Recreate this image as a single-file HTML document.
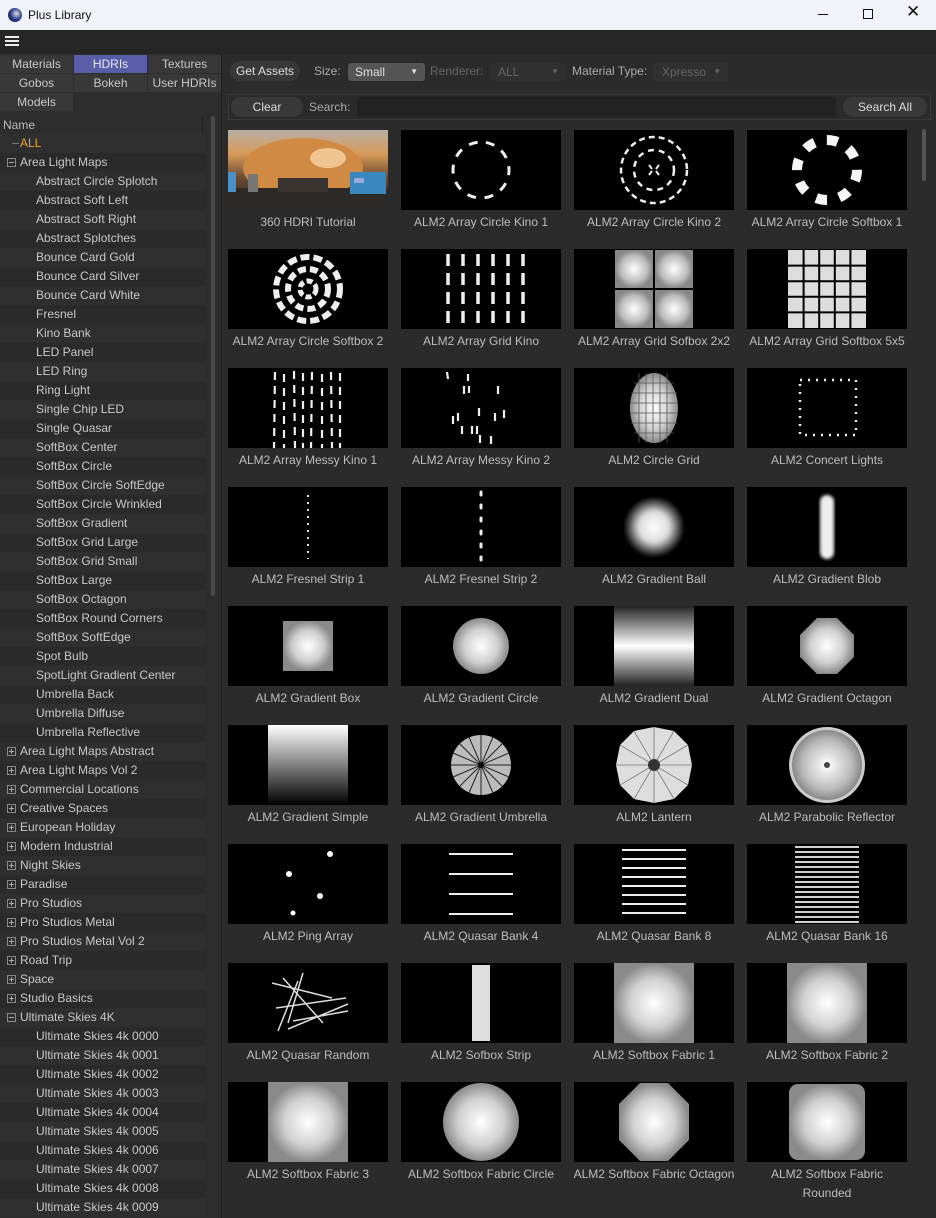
<!DOCTYPE html>
<html><head><meta charset="utf-8"><style>
*{margin:0;padding:0;box-sizing:border-box}
body{width:936px;height:1218px;overflow:hidden;background:#2b2b2b;font-family:"Liberation Sans",sans-serif;font-size:12px;color:#c8c8c8;position:relative}
.abs{position:absolute}
#title{left:0;top:0;width:936px;height:30px;background:#f0f3f9;color:#111;font-size:12px}
#menu{left:0;top:30px;width:936px;height:24px;background:#262626}
#left{left:0;top:54px;width:222px;height:1164px;background:#2d2d2d;border-right:1px solid #1e1e1e}
.tab{position:absolute;height:18px;background:#383838;color:#c8c8c8;text-align:center;line-height:18px;font-size:12px}
.row{position:absolute;left:0;width:206px;height:19px;line-height:19px;white-space:nowrap}
.row.o{background:#2f2f2f}
.row.e{background:#2a2a2a}
.box{position:absolute;left:7px;top:5px;width:9px;height:9px;border:1px solid #8a8a8a}
.box:before{content:"";position:absolute;left:1px;top:3px;width:5px;height:1px;background:#aaa}
.box.p:after{content:"";position:absolute;left:3px;top:1px;width:1px;height:5px;background:#aaa}
.vl{position:absolute;left:27px;width:1px;background:#6a6a6a}
#right{left:223px;top:54px;width:713px;height:1164px;background:#2b2b2b}
.btn{position:absolute;height:20px;border-radius:10px;background:#393939;color:#ddd;text-align:center;line-height:20px;font-size:12px}
.cell{position:absolute;width:160px}
.cell svg{display:block;width:160px;height:80px;background:#000}
.cell div{text-align:center;margin-top:3px;line-height:19px;color:#bdbdbd;font-size:12px;width:180px;margin-left:-10px}
</style></head><body>
<svg width="0" height="0" style="position:absolute"><defs>
<radialGradient id="g"><stop offset="0" stop-color="#fff"/><stop offset="0.7" stop-color="#bbb"/><stop offset="1" stop-color="#888"/></radialGradient>
<radialGradient id="s"><stop offset="0" stop-color="#fff"/><stop offset="0.5" stop-color="#ddd"/><stop offset="1" stop-color="#000"/></radialGradient>
<radialGradient id="c"><stop offset="0" stop-color="#fff"/><stop offset="0.6" stop-color="#d0d0d0"/><stop offset="1" stop-color="#8a8a8a"/></radialGradient>
<linearGradient id="v" x1="0" y1="0" x2="0" y2="1"><stop offset="0" stop-color="#fff"/><stop offset="1" stop-color="#000"/></linearGradient>
<linearGradient id="d" x1="0" y1="0" x2="0" y2="1"><stop offset="0" stop-color="#222"/><stop offset="0.5" stop-color="#fff"/><stop offset="1" stop-color="#222"/></linearGradient>
<linearGradient id="ph" x1="0" y1="0" x2="0" y2="1"><stop offset="0" stop-color="#b8aea4"/><stop offset="0.3" stop-color="#d89a58"/><stop offset="0.6" stop-color="#6a4a30"/><stop offset="1" stop-color="#2a2624"/></linearGradient>
<filter id="b"><feGaussianBlur stdDeviation="1.5"/></filter>
</defs></svg>

<div id="title" class="abs">
 <div class="abs" style="left:8px;top:8px;width:14px;height:14px;border-radius:50%;background:radial-gradient(circle at 60% 40%,#ddd,#2a3c8c 50%,#111)"></div>
 <div class="abs" style="left:28px;top:8px">Plus Library</div>
 <div class="abs" style="left:818px;top:14px;width:10px;height:1px;background:#111"></div>
 <div class="abs" style="left:863px;top:9px;width:10px;height:10px;border:1px solid #111"></div>
 <div class="abs" style="left:906px;top:2px;font-size:17px">✕</div>
</div>
<div id="menu" class="abs">
 <div class="abs" style="left:5px;top:6px;width:14px;height:2px;background:#eee;box-shadow:0 4px 0 #eee,0 8px 0 #eee"></div>
</div>
<div id="left" class="abs">
 <div class="tab" style="left:0;top:1px;width:73px">Materials</div>
 <div class="tab" style="left:74px;top:1px;width:73px;background:#5a5ea8;color:#e8e8f8">HDRIs</div>
 <div class="tab" style="left:148px;top:1px;width:73px">Textures</div>
 <div class="tab" style="left:0;top:20px;width:73px">Gobos</div>
 <div class="tab" style="left:74px;top:20px;width:73px">Bokeh</div>
 <div class="tab" style="left:148px;top:20px;width:73px">User HDRIs</div>
 <div class="tab" style="left:0;top:39px;width:73px">Models</div>
 <div class="abs" style="left:0;top:62px;width:206px;height:19px;line-height:19px;padding-left:3px;border-bottom:1px solid #222;color:#bbb">Name</div>
 <div class="abs" style="left:202px;top:62px;width:1px;height:19px;background:#222"></div>
 <div class="abs" style="left:211px;top:62px;width:4px;height:480px;background:#4a4a4a;border-radius:2px"></div>
</div>
<div class="abs" style="left:0;top:134px;width:222px;height:1084px">
<div class="row o" style="top:0"><span style="position:absolute;left:12px;top:9px;width:7px;height:1px;background:#777"></span><span style="position:absolute;left:20px;color:#f0a030">ALL</span></div>
<div class="row e" style="top:19px"><span class="box"></span><span style="position:absolute;left:20px">Area Light Maps</span></div>
<div class="vl" style="top:38px;height:580px"></div>
</div>
<div class="abs" style="left:0;top:172px;width:222px">
<div class="row o" style="top:0px;padding-left:36px">Abstract Circle Splotch</div>
<div class="row e" style="top:19px;padding-left:36px">Abstract Soft Left</div>
<div class="row o" style="top:38px;padding-left:36px">Abstract Soft Right</div>
<div class="row e" style="top:57px;padding-left:36px">Abstract Splotches</div>
<div class="row o" style="top:76px;padding-left:36px">Bounce Card Gold</div>
<div class="row e" style="top:95px;padding-left:36px">Bounce Card Silver</div>
<div class="row o" style="top:114px;padding-left:36px">Bounce Card White</div>
<div class="row e" style="top:133px;padding-left:36px">Fresnel</div>
<div class="row o" style="top:152px;padding-left:36px">Kino Bank</div>
<div class="row e" style="top:171px;padding-left:36px">LED Panel</div>
<div class="row o" style="top:190px;padding-left:36px">LED Ring</div>
<div class="row e" style="top:209px;padding-left:36px">Ring Light</div>
<div class="row o" style="top:228px;padding-left:36px">Single Chip LED</div>
<div class="row e" style="top:247px;padding-left:36px">Single Quasar</div>
<div class="row o" style="top:266px;padding-left:36px">SoftBox Center</div>
<div class="row e" style="top:285px;padding-left:36px">SoftBox Circle</div>
<div class="row o" style="top:304px;padding-left:36px">SoftBox Circle SoftEdge</div>
<div class="row e" style="top:323px;padding-left:36px">SoftBox Circle Wrinkled</div>
<div class="row o" style="top:342px;padding-left:36px">SoftBox Gradient</div>
<div class="row e" style="top:361px;padding-left:36px">SoftBox Grid Large</div>
<div class="row o" style="top:380px;padding-left:36px">SoftBox Grid Small</div>
<div class="row e" style="top:399px;padding-left:36px">SoftBox Large</div>
<div class="row o" style="top:418px;padding-left:36px">SoftBox Octagon</div>
<div class="row e" style="top:437px;padding-left:36px">SoftBox Round Corners</div>
<div class="row o" style="top:456px;padding-left:36px">SoftBox SoftEdge</div>
<div class="row e" style="top:475px;padding-left:36px">Spot Bulb</div>
<div class="row o" style="top:494px;padding-left:36px">SpotLight Gradient Center</div>
<div class="row e" style="top:513px;padding-left:36px">Umbrella Back</div>
<div class="row o" style="top:532px;padding-left:36px">Umbrella Diffuse</div>
<div class="row e" style="top:551px;padding-left:36px">Umbrella Reflective</div>
<div class="row o" style="top:570px;padding-left:20px"><span class="box p"></span>Area Light Maps Abstract</div>
<div class="row e" style="top:589px;padding-left:20px"><span class="box p"></span>Area Light Maps Vol 2</div>
<div class="row o" style="top:608px;padding-left:20px"><span class="box p"></span>Commercial Locations</div>
<div class="row e" style="top:627px;padding-left:20px"><span class="box p"></span>Creative Spaces</div>
<div class="row o" style="top:646px;padding-left:20px"><span class="box p"></span>European Holiday</div>
<div class="row e" style="top:665px;padding-left:20px"><span class="box p"></span>Modern Industrial</div>
<div class="row o" style="top:684px;padding-left:20px"><span class="box p"></span>Night Skies</div>
<div class="row e" style="top:703px;padding-left:20px"><span class="box p"></span>Paradise</div>
<div class="row o" style="top:722px;padding-left:20px"><span class="box p"></span>Pro Studios</div>
<div class="row e" style="top:741px;padding-left:20px"><span class="box p"></span>Pro Studios Metal</div>
<div class="row o" style="top:760px;padding-left:20px"><span class="box p"></span>Pro Studios Metal Vol 2</div>
<div class="row e" style="top:779px;padding-left:20px"><span class="box p"></span>Road Trip</div>
<div class="row o" style="top:798px;padding-left:20px"><span class="box p"></span>Space</div>
<div class="row e" style="top:817px;padding-left:20px"><span class="box p"></span>Studio Basics</div>
<div class="row o" style="top:836px;padding-left:20px"><span class="box"></span>Ultimate Skies 4K</div>
<div class="row e" style="top:855px;padding-left:36px">Ultimate Skies 4k 0000</div>
<div class="row o" style="top:874px;padding-left:36px">Ultimate Skies 4k 0001</div>
<div class="row e" style="top:893px;padding-left:36px">Ultimate Skies 4k 0002</div>
<div class="row o" style="top:912px;padding-left:36px">Ultimate Skies 4k 0003</div>
<div class="row e" style="top:931px;padding-left:36px">Ultimate Skies 4k 0004</div>
<div class="row o" style="top:950px;padding-left:36px">Ultimate Skies 4k 0005</div>
<div class="row e" style="top:969px;padding-left:36px">Ultimate Skies 4k 0006</div>
<div class="row o" style="top:988px;padding-left:36px">Ultimate Skies 4k 0007</div>
<div class="row e" style="top:1007px;padding-left:36px">Ultimate Skies 4k 0008</div>
<div class="row o" style="top:1026px;padding-left:36px">Ultimate Skies 4k 0009</div>
</div>

<div id="right" class="abs">
 <div class="btn" style="left:7px;top:7px;width:70px">Get Assets</div>
 <div class="abs" style="left:91px;top:10px;color:#aaa">Size:</div>
 <div class="abs" style="left:125px;top:9px;width:77px;height:18px;background:#555;border-radius:3px;color:#e0e0e0;padding-left:7px;line-height:18px">Small<span style="position:absolute;right:7px;top:0;font-size:8px">▼</span></div>
 <div class="abs" style="left:207px;top:10px;color:#666">Renderer:</div>
 <div class="abs" style="left:268px;top:9px;width:75px;height:18px;background:#303030;border-radius:3px;color:#666;padding-left:7px;line-height:18px">ALL<span style="position:absolute;right:7px;top:0;font-size:8px">▼</span></div>
 <div class="abs" style="left:349px;top:10px;color:#aaa">Material Type:</div>
 <div class="abs" style="left:430px;top:9px;width:75px;height:18px;background:#303030;border-radius:3px;color:#666;padding-left:9px;line-height:18px">Xpresso<span style="position:absolute;right:7px;top:0;font-size:8px">▼</span></div>
 <div class="abs" style="left:5px;top:40px;width:703px;height:26px;border:1px solid #3a3a3a;background:#2a2a2a"></div>
 <div class="btn" style="left:8px;top:43px;width:72px">Clear</div>
 <div class="abs" style="left:86px;top:46px;color:#aaa">Search:</div>
 <div class="abs" style="left:134px;top:43px;width:479px;height:20px;background:#222;border-radius:3px"></div>
 <div class="btn" style="left:620px;top:43px;width:84px">Search All</div>
 <div class="abs" style="left:699px;top:75px;width:4px;height:52px;background:#555;border-radius:2px"></div>
</div>

<!-- Row 1 -->
<div class="cell" style="left:228px;top:130px"><svg viewBox="0 0 160 80" style="background:url(#ph)"><rect width="160" height="80" fill="url(#ph)"/><ellipse cx="75" cy="38" rx="60" ry="30" fill="#d08a44"/><ellipse cx="100" cy="28" rx="18" ry="10" fill="#f0c490"/><rect x="0" y="58" width="160" height="22" fill="#2e2a28"/><rect x="122" y="42" width="36" height="22" fill="#3a88c0"/><rect x="126" y="48" width="10" height="5" fill="#9ad"/><rect x="0" y="42" width="8" height="20" fill="#4a90c8"/><rect x="20" y="44" width="10" height="18" fill="#777"/><rect x="50" y="48" width="50" height="14" fill="#3a3430"/></svg><div>360 HDRI Tutorial</div></div>
<div class="cell" style="left:401px;top:130px"><svg viewBox="0 0 160 80"><circle cx="80" cy="40" r="28" fill="none" stroke="#eee" stroke-width="3" stroke-dasharray="9 8.6" transform="rotate(-80 80 40)"/></svg><div>ALM2 Array Circle Kino 1</div></div>
<div class="cell" style="left:574px;top:130px"><svg viewBox="0 0 160 80"><circle cx="80" cy="40" r="33" fill="none" stroke="#eee" stroke-width="2.5" stroke-dasharray="6 4"/><circle cx="80" cy="40" r="20" fill="none" stroke="#eee" stroke-width="2.5" stroke-dasharray="6 5"/><path d="M75 35l3 4M85 35l-3 4M75 45l3-4M85 45l-3-4" stroke="#eee" stroke-width="2"/></svg><div>ALM2 Array Circle Kino 2</div></div>
<div class="cell" style="left:747px;top:130px"><svg viewBox="0 0 160 80"><circle cx="80" cy="40" r="30" fill="none" stroke="#f5f5f5" stroke-width="10" stroke-dasharray="11 12.5"/></svg><div>ALM2 Array Circle Softbox 1</div></div>
<!-- Row 2 -->
<div class="cell" style="left:228px;top:249px"><svg viewBox="0 0 160 80"><circle cx="80" cy="40" r="32" fill="none" stroke="#eee" stroke-width="6" stroke-dasharray="9 4"/><circle cx="80" cy="40" r="20" fill="none" stroke="#eee" stroke-width="6" stroke-dasharray="8 4"/><circle cx="80" cy="40" r="8" fill="none" stroke="#eee" stroke-width="5" stroke-dasharray="6 3"/></svg><div>ALM2 Array Circle Softbox 2</div></div>
<div class="cell" style="left:401px;top:249px"><svg viewBox="0 0 160 80"><g stroke="#eee" stroke-width="3.5" stroke-dasharray="12 7"><path d="M47 5v75M62 5v75M77 5v75M92 5v75M107 5v75M122 5v75"/></g></svg><div>ALM2 Array Grid Kino</div></div>
<div class="cell" style="left:574px;top:249px"><svg viewBox="0 0 160 80"><g fill="url(#g)"><rect x="41" y="1" width="38" height="38"/><rect x="81" y="1" width="38" height="38"/><rect x="41" y="41" width="38" height="38"/><rect x="81" y="41" width="38" height="38"/></g></svg><div>ALM2 Array Grid Sofbox 2x2</div></div>
<div class="cell" style="left:747px;top:249px"><svg viewBox="0 0 160 80"><g fill="#ddd"><path d="M41 1h78v78H41z"/></g><g stroke="#000" stroke-width="2"><path d="M56.6 0v80M72.2 0v80M87.8 0v80M103.4 0v80M40 16.6h80M40 32.2h80M40 47.8h80M40 63.4h80"/></g></svg><div>ALM2 Array Grid Softbox 5x5</div></div>
<!-- Row 3 -->
<div class="cell" style="left:228px;top:368px"><svg viewBox="0 0 160 80"><g stroke="#eee" stroke-width="2.2" stroke-dasharray="8 6"><path d="M47 4l-1 76M56 6v74M66 3l1 77M75 5v75M84 4l-1 76M94 6v74M103 4l1 76M112 5v75"/></g></svg><div>ALM2 Array Messy Kino 1</div></div>
<div class="cell" style="left:401px;top:368px"><svg viewBox="0 0 160 80" stroke="#eee" stroke-width="2.2"><path d="M46 4l1 7M67 6v7M63 18v8M68 18v7M97 18v8M78 40v8M103 42v8M94 45v8M52 48v8M57 45v8M61 58v8M71 58v8M76 58v8M79 67v8M90 68v8"/></svg><div>ALM2 Array Messy Kino 2</div></div>
<div class="cell" style="left:574px;top:368px"><svg viewBox="0 0 160 80"><ellipse cx="80" cy="40" rx="24" ry="35" fill="url(#c)"/><g stroke="#555" stroke-width="0.8"><path d="M60 15h40M57 25h46M56 35h48M56 45h48M57 55h46M60 65h40M65 5v70M72 5v70M79 5v70M86 5v70M93 5v70"/></g></svg><div>ALM2 Circle Grid</div></div>
<div class="cell" style="left:747px;top:368px"><svg viewBox="0 0 160 80"><rect x="53" y="12" width="56" height="55" fill="none" stroke="#eee" stroke-width="2.5" stroke-dasharray="2 6"/></svg><div>ALM2 Concert Lights</div></div>
<!-- Row 4 -->
<div class="cell" style="left:228px;top:487px"><svg viewBox="0 0 160 80"><path d="M80 8v64" stroke="#ddd" stroke-width="2" stroke-dasharray="2 5"/></svg><div>ALM2 Fresnel Strip 1</div></div>
<div class="cell" style="left:401px;top:487px"><svg viewBox="0 0 160 80"><path d="M80 5v72" stroke="#eee" stroke-width="3" stroke-dasharray="3 10" stroke-linecap="round"/></svg><div>ALM2 Fresnel Strip 2</div></div>
<div class="cell" style="left:574px;top:487px"><svg viewBox="0 0 160 80"><rect x="50" y="10" width="60" height="60" rx="18" fill="url(#s)" filter="url(#b)"/></svg><div>ALM2 Gradient Ball</div></div>
<div class="cell" style="left:747px;top:487px"><svg viewBox="0 0 160 80"><rect x="73" y="8" width="14" height="64" rx="7" fill="#eee" filter="url(#b)"/></svg><div>ALM2 Gradient Blob</div></div>
<!-- Row 5 -->
<div class="cell" style="left:228px;top:606px"><svg viewBox="0 0 160 80"><rect x="55" y="15" width="50" height="50" fill="url(#c)"/></svg><div>ALM2 Gradient Box</div></div>
<div class="cell" style="left:401px;top:606px"><svg viewBox="0 0 160 80"><circle cx="80" cy="40" r="28" fill="url(#c)"/></svg><div>ALM2 Gradient Circle</div></div>
<div class="cell" style="left:574px;top:606px"><svg viewBox="0 0 160 80"><rect x="40" y="0" width="80" height="80" fill="url(#d)"/></svg><div>ALM2 Gradient Dual</div></div>
<div class="cell" style="left:747px;top:606px"><svg viewBox="0 0 160 80"><polygon points="70,12 90,12 107,29 107,51 90,68 70,68 53,51 53,29" fill="url(#c)"/></svg><div>ALM2 Gradient Octagon</div></div>
<!-- Row 6 -->
<div class="cell" style="left:228px;top:725px"><svg viewBox="0 0 160 80"><rect x="40" y="0" width="80" height="80" fill="url(#v)"/></svg><div>ALM2 Gradient Simple</div></div>
<div class="cell" style="left:401px;top:725px"><svg viewBox="0 0 160 80"><circle cx="80" cy="40" r="30" fill="#bbb"/><g stroke="#222" stroke-width="1"><path d="M80 10v60M50 40h60M59 19l42 42M101 19l-42 42M68 12l24 56M92 12l-24 56M52 28l56 24M108 28l-56 24"/></g><circle cx="80" cy="40" r="3" fill="#000"/></svg><div>ALM2 Gradient Umbrella</div></div>
<div class="cell" style="left:574px;top:725px"><svg viewBox="0 0 160 80"><polygon points="80,2 100,6 114,20 118,40 114,60 100,74 80,78 60,74 46,60 42,40 46,20 60,6" fill="#ddd"/><g stroke="#777" stroke-width="0.8"><path d="M80 2v76M42 40h76M46 20l68 40M114 20l-68 40M60 6l40 68M100 6l-40 68"/></g><circle cx="80" cy="40" r="6" fill="#333"/></svg><div>ALM2 Lantern</div></div>
<div class="cell" style="left:747px;top:725px"><svg viewBox="0 0 160 80"><circle cx="80" cy="40" r="38" fill="#ccc"/><circle cx="80" cy="40" r="35" fill="url(#g)"/><circle cx="80" cy="40" r="3" fill="#444"/></svg><div>ALM2 Parabolic Reflector</div></div>
<!-- Row 7 -->
<div class="cell" style="left:228px;top:844px"><svg viewBox="0 0 160 80" fill="#fff"><circle cx="61" cy="30" r="3"/><circle cx="102" cy="10" r="3"/><circle cx="92" cy="52" r="3"/><circle cx="65" cy="69" r="2.5"/></svg><div>ALM2 Ping Array</div></div>
<div class="cell" style="left:401px;top:844px"><svg viewBox="0 0 160 80" stroke="#eee" stroke-width="2"><path d="M48 10h64M48 30h64M48 50h64M48 70h64"/></svg><div>ALM2 Quasar Bank 4</div></div>
<div class="cell" style="left:574px;top:844px"><svg viewBox="0 0 160 80" stroke="#eee" stroke-width="2"><path d="M48 6h64M48 15h64M48 24h64M48 33h64M48 42h64M48 51h64M48 60h64M48 69h64"/></svg><div>ALM2 Quasar Bank 8</div></div>
<div class="cell" style="left:747px;top:844px"><svg viewBox="0 0 160 80" stroke="#eee" stroke-width="1.8"><path d="M48 3h64M48 8h64M48 13h64M48 18h64M48 23h64M48 28h64M48 33h64M48 38h64M48 43h64M48 48h64M48 53h64M48 58h64M48 63h64M48 68h64M48 73h64M48 78h64"/></svg><div>ALM2 Quasar Bank 16</div></div>
<!-- Row 8 -->
<div class="cell" style="left:228px;top:963px"><svg viewBox="0 0 160 80" stroke="#ddd" stroke-width="1.5"><path d="M44 20l60 15M55 15l40 45M70 18l-20 50M48 45l70-10M60 66l60-25M75 10l-15 50M65 58l55-10"/></svg><div>ALM2 Quasar Random</div></div>
<div class="cell" style="left:401px;top:963px"><svg viewBox="0 0 160 80"><rect x="71" y="2" width="18" height="76" fill="#ddd"/></svg><div>ALM2 Sofbox Strip</div></div>
<div class="cell" style="left:574px;top:963px"><svg viewBox="0 0 160 80"><rect x="40" y="0" width="80" height="80" fill="url(#c)"/></svg><div>ALM2 Softbox Fabric 1</div></div>
<div class="cell" style="left:747px;top:963px"><svg viewBox="0 0 160 80"><rect x="40" y="0" width="80" height="80" fill="url(#c)"/></svg><div>ALM2 Softbox Fabric 2</div></div>
<!-- Row 9 -->
<div class="cell" style="left:228px;top:1082px"><svg viewBox="0 0 160 80"><rect x="40" y="0" width="80" height="80" fill="url(#c)"/></svg><div>ALM2 Softbox Fabric 3</div></div>
<div class="cell" style="left:401px;top:1082px"><svg viewBox="0 0 160 80"><ellipse cx="80" cy="40" rx="38" ry="39" fill="url(#c)"/></svg><div>ALM2 Softbox Fabric Circle</div></div>
<div class="cell" style="left:574px;top:1082px"><svg viewBox="0 0 160 80"><polygon points="66,1 94,1 115,22 115,58 94,79 66,79 45,58 45,22" fill="url(#c)"/></svg><div>ALM2 Softbox Fabric Octagon</div></div>
<div class="cell" style="left:747px;top:1082px"><svg viewBox="0 0 160 80"><rect x="42" y="2" width="76" height="76" rx="9" fill="url(#c)"/></svg><div>ALM2 Softbox Fabric<br>Rounded</div></div>
</body></html>
